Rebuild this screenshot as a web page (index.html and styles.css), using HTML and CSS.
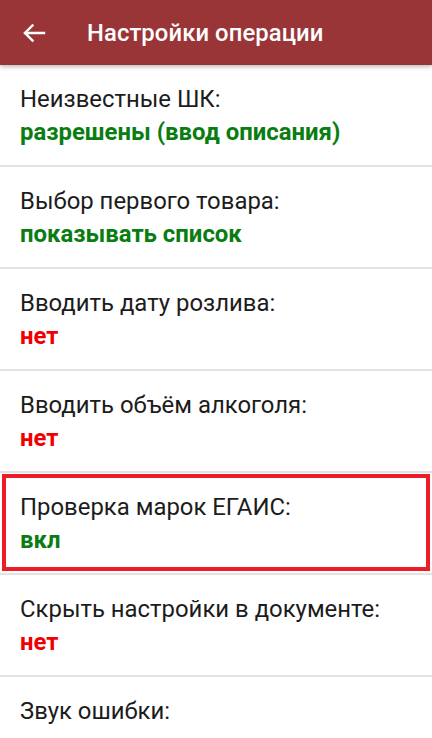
FILE: index.html
```html
<!DOCTYPE html>
<html lang="ru">
<head>
<meta charset="utf-8">
<link rel="stylesheet" href="styles.css">
</head>
<body>
<header class="appbar">
  <svg class="back" width="24" height="20" viewBox="0 0 24 20">
    <path d="M3 10H22M10.5 2.5L3 10L10.5 17.5" fill="none" stroke="#fff" stroke-width="2.4" stroke-linecap="square"/>
  </svg>
  <h1 class="title">Настройки операции</h1>
</header>
<main class="list">
  <div class="row"><div class="label">Неизвестные ШК:</div><div class="value on">разрешены (ввод описания)</div></div>
  <div class="row"><div class="label">Выбор первого товара:</div><div class="value on">показывать список</div></div>
  <div class="row"><div class="label">Вводить дату розлива:</div><div class="value off">нет</div></div>
  <div class="row"><div class="label">Вводить объём алкоголя:</div><div class="value off">нет</div></div>
  <div class="row highlighted"><div class="label">Проверка марок ЕГАИС:</div><div class="value on">вкл</div><div class="mark"></div></div>
  <div class="row"><div class="label">Скрыть настройки в документе:</div><div class="value off">нет</div></div>
  <div class="row"><div class="label">Звук ошибки:</div></div>
</main>
</body>
</html>
```
FILE: styles.css
```css
html, body {
  margin: 0;
  padding: 0;
  background: #fff;
  font-family: Roboto, "Noto Sans", sans-serif;
  overflow: hidden;
  height: 738px;
}
.appbar {
  height: 65px;
  background: #993537;
  display: flex;
  align-items: center;
  box-shadow: 0 2px 4px rgba(0,0,0,0.25);
  position: relative;
  z-index: 2;
}
.back {
  margin-left: 22px;
  margin-top: 1px;
  flex: none;
}
.title {
  margin: 0 0 0 41px;
  color: #fff;
  font-size: 23.8px;
  font-weight: 500;
  letter-spacing: 0.1px;
}
.list {
  display: flex;
  flex-direction: column;
}
.row {
  position: relative;
  padding: 18px 20px 16px;
  border-bottom: 2px solid #e3e3e3;
  height: 66px;
  flex: none;
}
.label, .value {
  font-size: 23.9px;
  line-height: 33px;
  white-space: nowrap;
}
.label {
  color: #1c1c1c;
}
.value {
  font-weight: 700;
}
.value.on { color: #0a7d12; }
.value.off { color: #f00000; }
.mark {
  position: absolute;
  left: 2px;
  right: 2px;
  top: 1px;
  bottom: 2px;
  border: 4px solid #ee1c25;
  pointer-events: none;
}
```
